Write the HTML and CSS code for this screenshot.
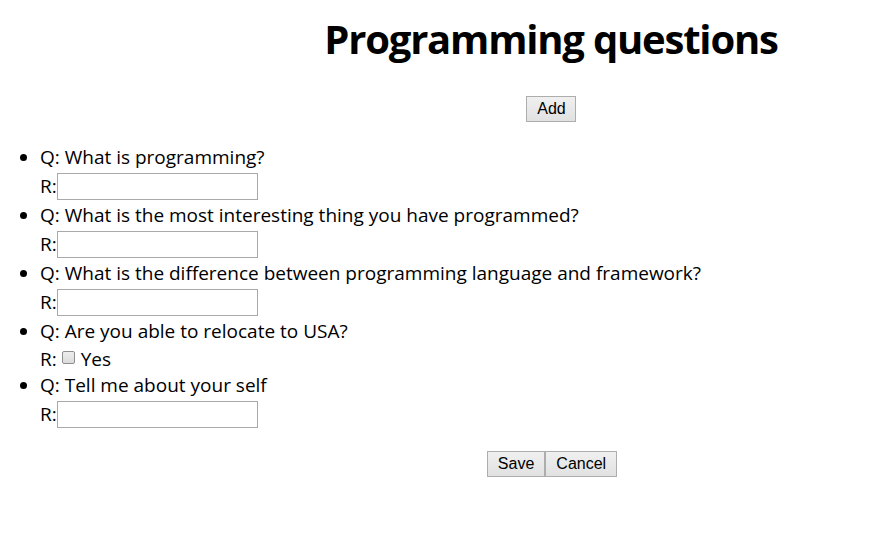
FILE: index.html
```html
<!DOCTYPE html>
<html>
<head>
<meta charset="utf-8">
<link rel="stylesheet" href="styles.css">
</head>
<body>
<h1 class="title">Programming questions</h1>
<div class="center-row add-row"><button class="btn btn-add">Add</button></div>
<ul class="questions">
  <li class="item">
    <div class="q">Q: What is programming?</div>
    <div class="r">R:<input class="answer" type="text"></div>
  </li>
  <li class="item">
    <div class="q">Q: What is the most interesting thing you have programmed?</div>
    <div class="r">R:<input class="answer" type="text"></div>
  </li>
  <li class="item">
    <div class="q">Q: What is the difference between programming language and framework?</div>
    <div class="r">R:<input class="answer" type="text"></div>
  </li>
  <li class="item item-check">
    <div class="q">Q: Are you able to relocate to USA?</div>
    <div class="r r-check">R: <span class="check"></span> Yes</div>
  </li>
  <li class="item">
    <div class="q">Q: Tell me about your self</div>
    <div class="r">R:<input class="answer" type="text"></div>
  </li>
</ul>
<div class="center-row actions"><button class="btn btn-save">Save</button><button class="btn">Cancel</button></div>
</body>
</html>
```
FILE: styles.css
```css
html, body { background: #fff; }
body {
  margin: 8px;
  font-family: "Open Sans", "Noto Sans", sans-serif;
  color: #000;
}
.title {
  margin: 7px 0 0 0;
  padding-left: 207px;
  text-align: center;
  font-size: 40px;
  font-weight: bold;
  line-height: 48px;
  letter-spacing: -1.2px;
}
.center-row {
  padding-left: 207px;
  display: flex;
  justify-content: center;
}
.add-row { margin-top: 33px; }
.btn {
  font-family: "Liberation Sans", Arial, sans-serif;
  font-size: 16px;
  height: 26px;
  padding: 0 10px;
  margin: 0;
  border: 1px solid #adadad;
  background: linear-gradient(#f0f0f0, #e1e1e1);
  color: #000;
  border-radius: 0;
}
.btn-add { padding: 0 9px 0 10px; }
.btn-save { margin-left: 2px; }
.questions {
  margin: 23px 0 0 0;
  padding-left: 32px;
  font-size: 19px;
  line-height: 25px;
}
.item {
  list-style: disc;
  height: 58px;
}
.item-check { height: 54px; }
.q { height: 28px; line-height: 25px; }
.r {
  height: 30px;
  display: flex;
  align-items: flex-start;
  line-height: 27px;
}
.r-check { height: 26px; line-height: 25px; }
.answer {
  box-sizing: border-box;
  width: 201px;
  height: 27px;
  margin: 0;
  border: 1px solid #a9a9a9;
  padding: 0;
}
.check {
  display: inline-block;
  box-sizing: border-box;
  width: 13px;
  height: 13px;
  margin: 4px 6px 0 5px;
  border: 1px solid #8f8f8f;
  border-radius: 2px;
  background: linear-gradient(#ededed, #dcdcdc);
}
.actions { margin-top: 20px; }
```
